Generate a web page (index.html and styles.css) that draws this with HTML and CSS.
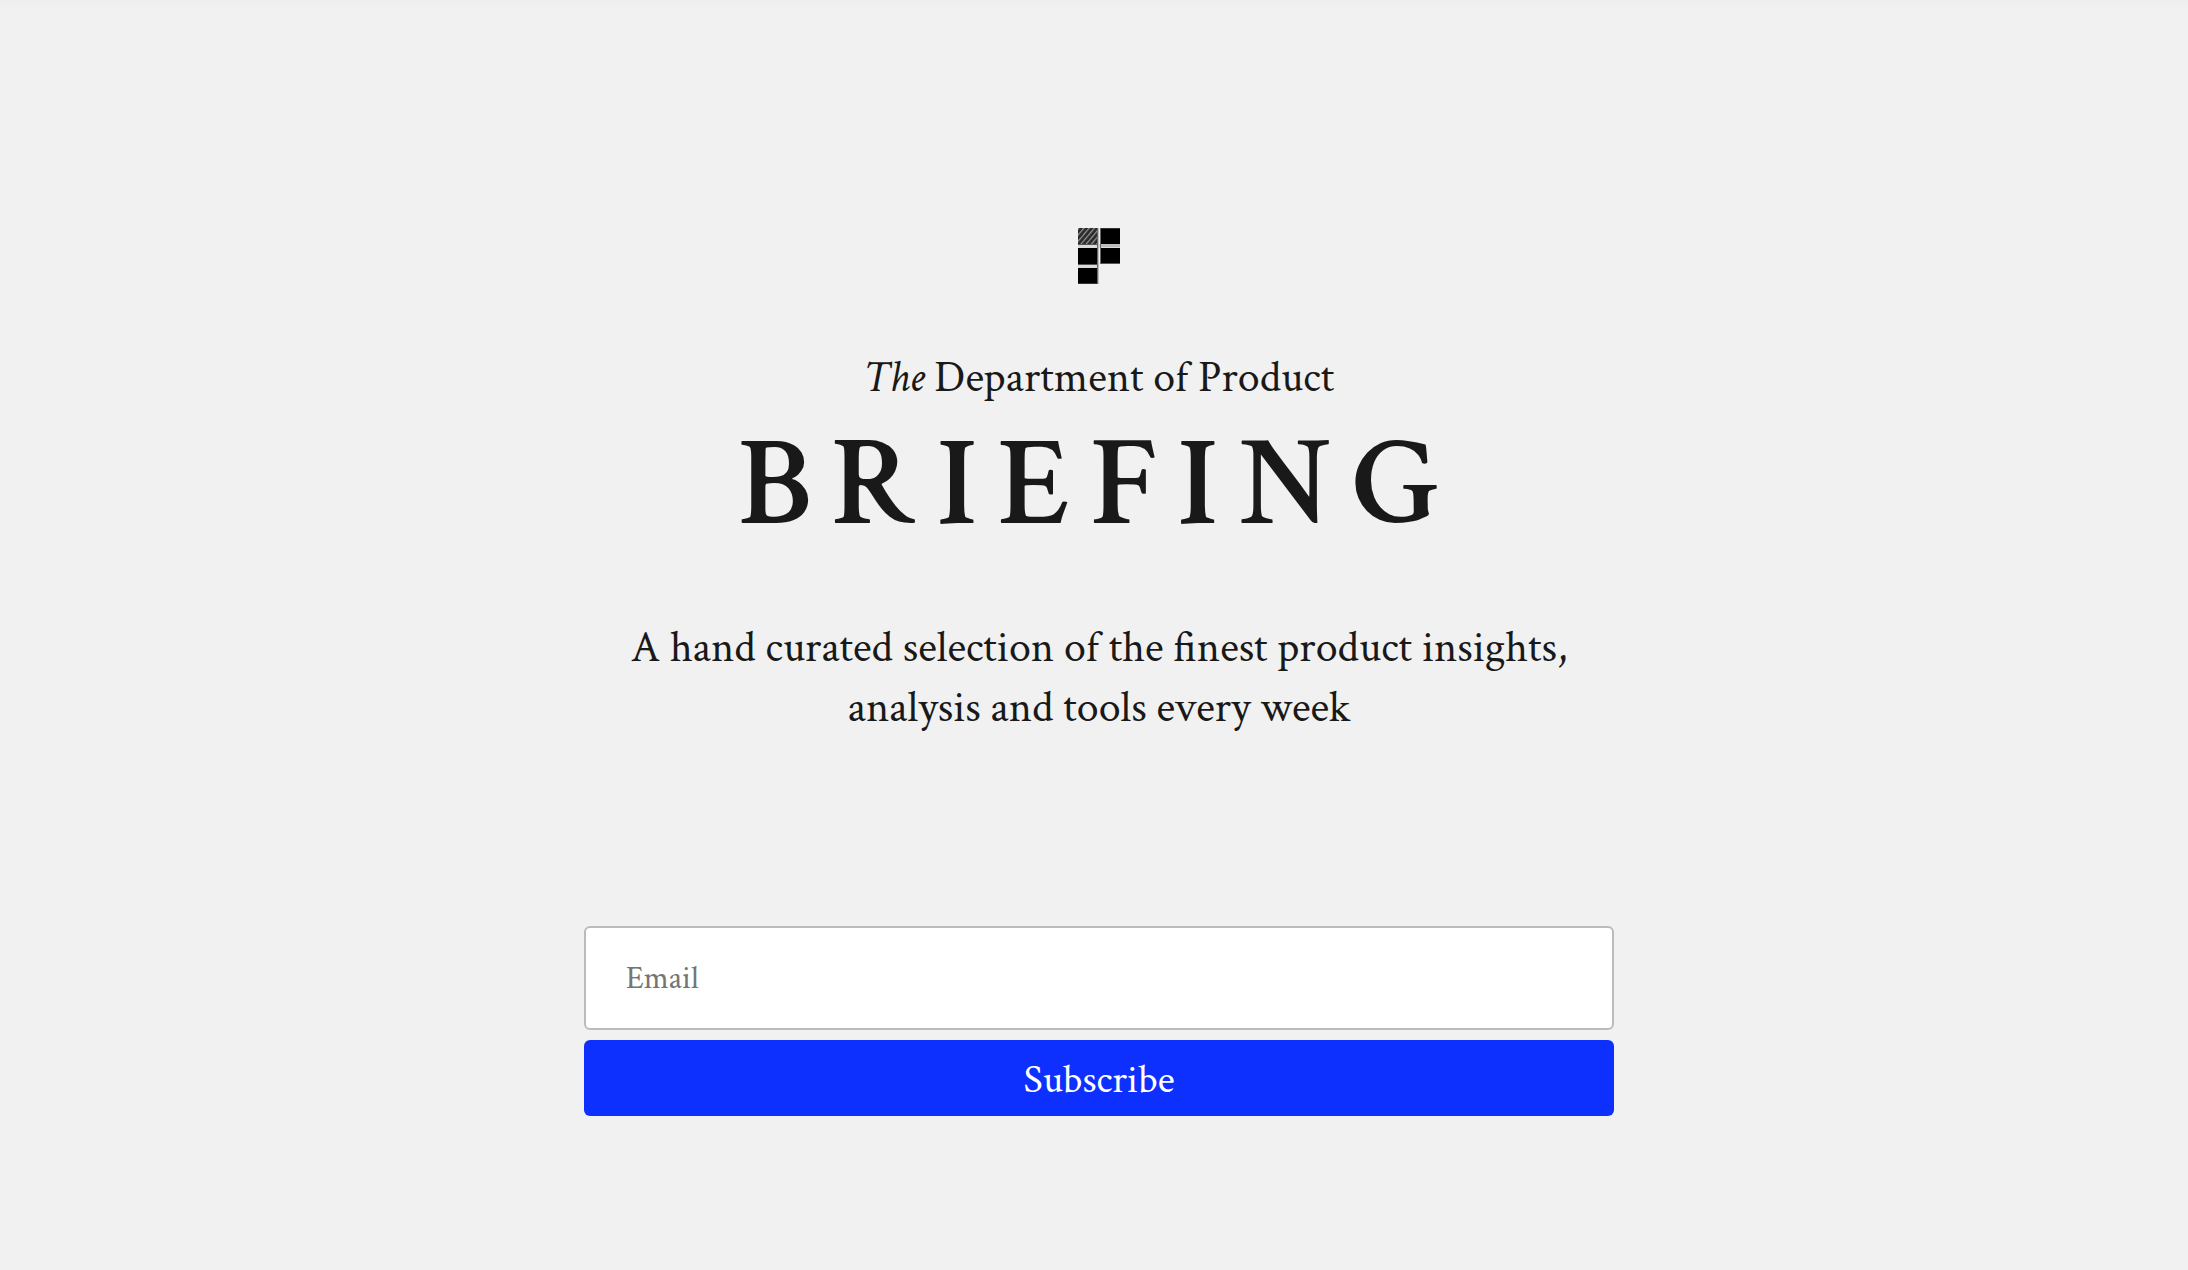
FILE: index.html
```
<!DOCTYPE html>
<html lang="en">
<head>
  <meta charset="UTF-8" />
  <meta name="viewport" content="width=device-width, initial-scale=1.0"/>
  <title>Department of Product Briefing</title>
  <link rel="stylesheet" href="styles.css">
</head>
<body>

  <main class="landing">
    <!-- Logo -->
    <svg class="logo" viewBox="0 0 42 56" aria-hidden="true">
      <defs>
        <pattern id="hatch" width="4" height="4" patternUnits="userSpaceOnUse" patternTransform="rotate(40)">
          <rect width="4" height="4" fill="#292929"/>
          <rect width="1.2" height="4" fill="#999"/>
        </pattern>
      </defs>
      <path d="M0 16h42v4H0zM0 36h20v4H0z" fill="#dadada"/>
      <path d="M22 16h20v3H22z" fill="#bdbdbd"/>
      <path d="M19 0h1v56h-1zM22 0h1v36h-1z" fill="#666"/>
      <path d="M20 0h1v56h-1z" fill="#bbb"/>
      <path d="M0 16h19v1H0zM0 36h19v1H0zM23 35h19v1H23z" fill="#555"/>
      <rect width="19" height="16" fill="url(#hatch)"/>
      <path d="M23 0h19v16H23zM0 20h19v16H0zM23 20h19v15H23zM0 40h19v16H0z" fill="#000"/>
      <path d="M23 0h19v1H23zM0 55h19v1H0z" fill="#333"/>
    </svg>

    <h1 class="title">
      <span class="publisher"><em>The</em> Department of Product</span>
      <span class="name">BRIEFING</span>
    </h1>
    <p class="tagline">A hand curated selection of the finest product insights, analysis and tools every week</p>

    <!-- Signup -->
    <form class="signup">
      <input type="email" id="email" placeholder="Email" aria-label="Email" required />
      <button type="submit">Subscribe</button>
    </form>
  </main>

</body>
</html>
```

FILE: styles.css
```
* {
  box-sizing: border-box;
  font-family: 'Crimson Text', 'Liberation Serif', serif;
}
body {
  margin: 0;
  min-height: 100vh;
  background: linear-gradient(#eee, #f1f1f1 10px) #f1f1f1;
  color: #191919;
}

.landing {
  display: flex;
  flex-direction: column;
  align-items: center;
  padding: 228px 20px 60px 30px;
}
.logo {
  width: 42px;
  height: 56px;
  margin-bottom: 64px;
}

/* === Title === */
.title {
  margin: 0 0 56px;
  display: flex;
  flex-direction: column;
  align-items: center;
}
.publisher {
  font-size: 44px;
  line-height: 60px;
  font-weight: 400;
}
.name {
  font-size: 128px;
  line-height: 154px;
  font-weight: 600;
  letter-spacing: 20px;
}
.tagline {
  max-width: 1030px;
  margin: 0 0 188px;
  font-size: 44px;
  line-height: 60px;
  text-align: center;
}

/* === Signup form === */
.signup {
  display: flex;
  flex-direction: column;
  gap: 10px;
  width: 100%;
  max-width: 1030px;
}
.signup input {
  width: 100%;
  height: 104px;
  padding: 0 40px;
  border: 2px solid #bbb;
  border-radius: 6px;
  background: #fff;
  font-size: 32px;
}
.signup input::placeholder { color: #757575; }
.signup button {
  height: 76px;
  padding: 4px 0 0;
  border: none;
  border-radius: 6px;
  background: #0d30ff;
  color: #fff;
  font-size: 40px;
  cursor: pointer;
}
```
